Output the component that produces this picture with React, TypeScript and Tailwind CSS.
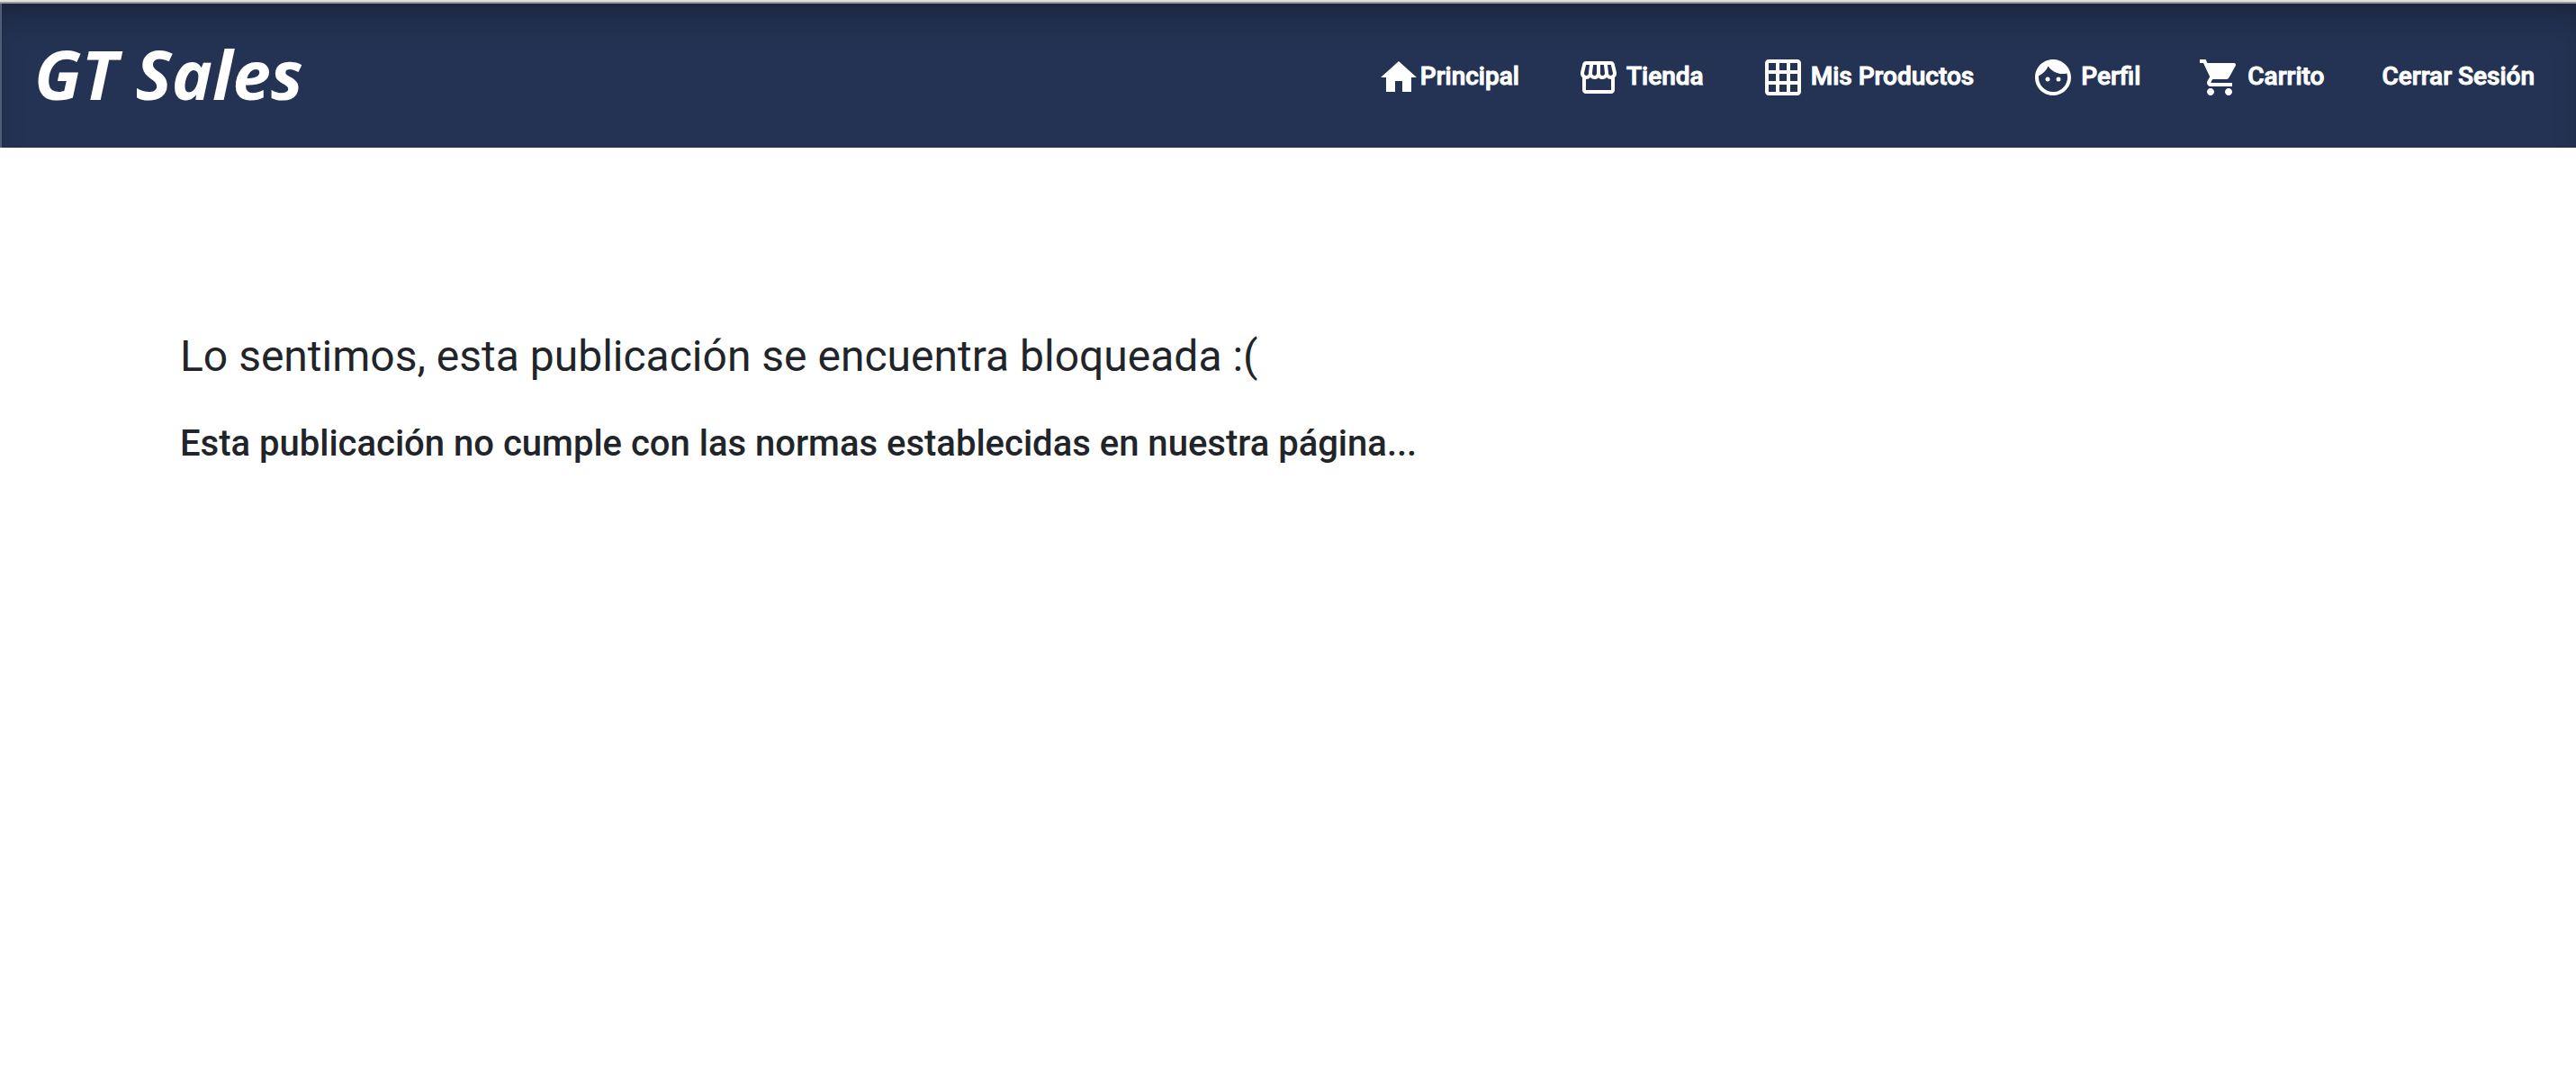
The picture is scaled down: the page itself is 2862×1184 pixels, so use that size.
import type { IconType } from "react-icons";
import { MdHome, MdOutlineStorefront, MdOutlineGridOn, MdFace, MdShoppingCart } from "react-icons/md";

type NavItem = { label: string; icon?: IconType; tight?: boolean };

const items: NavItem[] = [
  { label: "Principal", icon: MdHome, tight: true },
  { label: "Tienda", icon: MdOutlineStorefront },
  { label: "Mis Productos", icon: MdOutlineGridOn },
  { label: "Perfil", icon: MdFace },
  { label: "Carrito", icon: MdShoppingCart },
  { label: "Cerrar Sesión" },
];

function NavLink({ label, icon: Icon, tight }: NavItem) {
  return (
    <a href="#" className={tight ? "flex items-center" : "flex items-center gap-[7px]"}>
      {Icon && <Icon className="size-12 shrink-0" aria-hidden="true" />}
      <span className="pb-0.5 [-webkit-text-stroke:1px_currentColor]">{label}</span>
    </a>
  );
}

export default function App() {
  return (
    <div className="min-h-screen bg-white font-['Roboto',sans-serif] text-[#212529]">
      <div className="h-[2px] bg-[#e2e2e2]" />
      <div className="h-[2px] bg-[#9a9a9a]" />
      <header className="flex h-40 items-center justify-between border-l-2 border-[#505c76] bg-[#243354] pr-[46px] pl-9 text-white shadow-[inset_0_28px_40px_-20px_rgba(0,0,0,0.35)]">
        <a href="#" className="pb-1 font-['Open_Sans',sans-serif] text-[76px] leading-[96px] font-bold whitespace-nowrap italic">
          GT Sales
        </a>
        <nav className="flex items-center gap-16 pt-1 text-[28px] leading-[42px] font-medium whitespace-nowrap">
          {items.map((item) => (
            <NavLink key={item.label} {...item} />
          ))}
        </nav>
      </header>
      <main className="px-[200px] pt-[203px]">
        <h1 className="text-[48px] leading-[58px]">Lo sentimos, esta publicación se encuentra bloqueada :(</h1>
        <h2 className="mt-11 text-[40px] leading-[48px] font-medium">
          Esta publicación no cumple con las normas establecidas en nuestra página...
        </h2>
      </main>
    </div>
  );
}
